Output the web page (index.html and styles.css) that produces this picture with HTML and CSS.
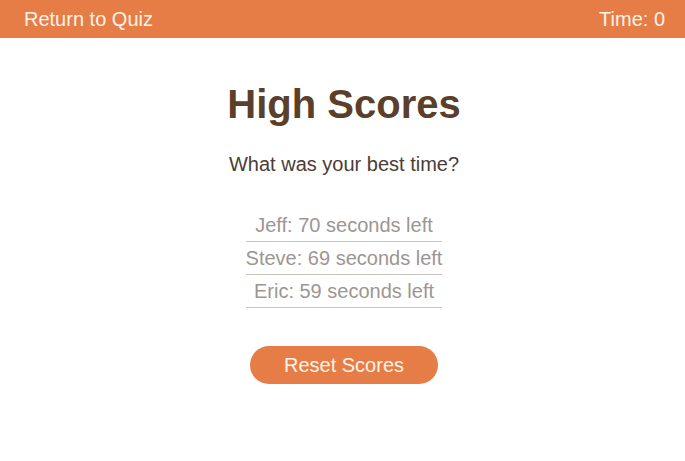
FILE: index.html
```html
<!DOCTYPE html>
<html>
<head>
<meta charset="utf-8">
<link rel="stylesheet" href="styles.css">
</head>
<body>
<header class="topbar">
  <a class="back-link" href="#">Return to Quiz</a>
  <span class="timer">Time: 0</span>
</header>
<main class="content">
  <h1 class="title">High Scores</h1>
  <p class="subtitle">What was your best time?</p>
  <ul class="scores">
    <li class="score">Jeff: 70 seconds left</li>
    <li class="score">Steve: 69 seconds left</li>
    <li class="score">Eric: 59 seconds left</li>
  </ul>
  <button class="reset">Reset Scores</button>
</main>
</body>
</html>
```
FILE: styles.css
```css
html, body {
  margin: 0;
  padding: 0;
  background: #ffffff;
  font-family: "Liberation Sans", Arial, sans-serif;
}
.topbar {
  display: flex;
  justify-content: space-between;
  align-items: center;
  height: 38px;
  padding: 0 20px 0 24px;
  background: #e67d46;
  color: #fdf3e8;
  font-size: 20px;
}
.back-link {
  color: #fdf3e8;
  text-decoration: none;
}
.content {
  display: flex;
  flex-direction: column;
  align-items: center;
  padding-left: 3px;
}
.title {
  margin: 42px 0 0;
  font-size: 40px;
  line-height: 48px;
  font-weight: bold;
  color: #5b3f2b;
}
.subtitle {
  margin: 24px 0 0;
  font-size: 20px;
  line-height: 24px;
  color: #4a3d36;
}
.scores {
  list-style: none;
  margin: 33px 0 0;
  padding: 0;
}
.score {
  font-size: 20px;
  line-height: 31px;
  padding-top: 1px;
  color: #9c9692;
  border-bottom: 1px solid #c9c2bd;
  text-align: center;
}
.reset {
  margin-top: 38px;
  width: 188px;
  height: 38px;
  border: none;
  border-radius: 19px;
  background: #e67d46;
  color: #fdf3e8;
  font-family: "Liberation Sans", Arial, sans-serif;
  font-size: 20px;
}
```
